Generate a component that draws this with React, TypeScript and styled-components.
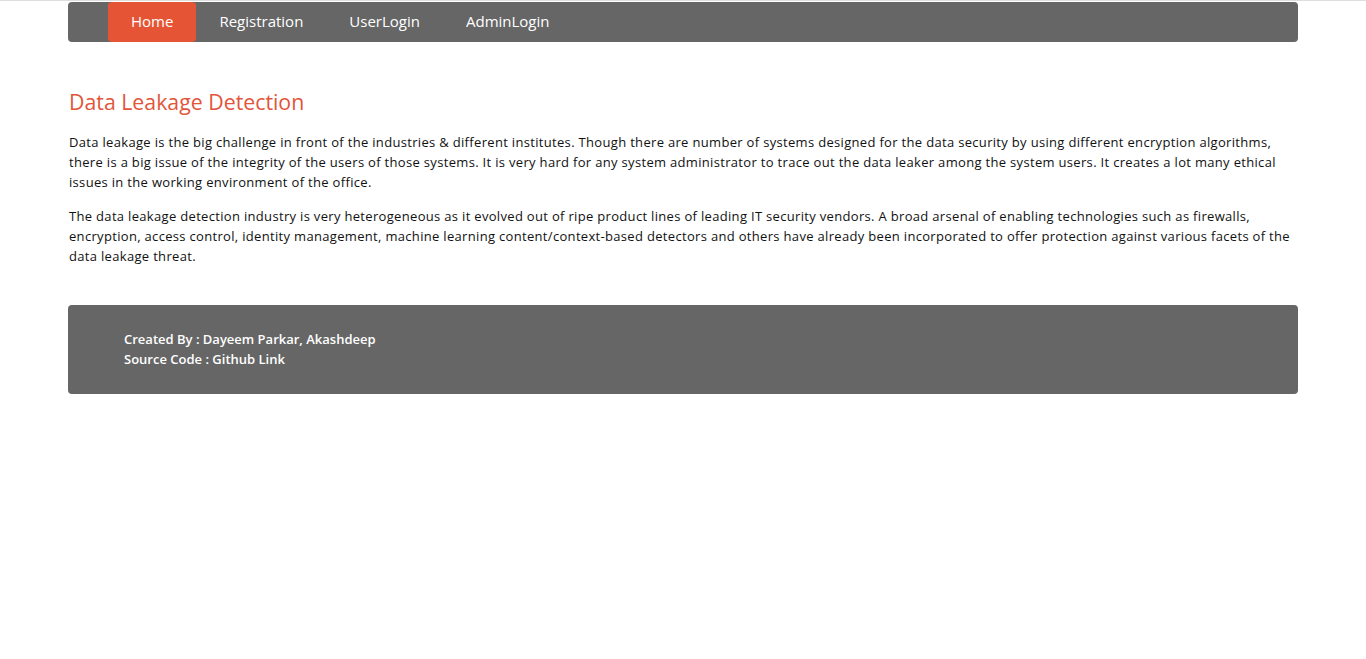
import React from "react";
import styled, { createGlobalStyle } from "styled-components";

const Global = createGlobalStyle`
  html, body { margin: 0; padding: 0; background: #fff; }
  body { border-top: 1px solid #dedede; font-family: "Open Sans", "Liberation Sans", Arial, sans-serif; }
`;

const Page = styled.div`
  width: 1230px;
  margin: 0 auto;
  padding-top: 1px;
`;

const Nav = styled.nav`
  height: 40px;
  background: #666666;
  border-radius: 4px;
  display: flex;
  padding-left: 40px;
`;

const NavItem = styled.a<{ $active?: boolean }>`
  display: flex;
  align-items: center;
  padding: 0 23px 2px 23px;
  box-sizing: border-box;
  height: 40px;
  color: #fff;
  font-size: 15px;
  text-decoration: none;
  border-radius: 4px;
  background: ${(p) => (p.$active ? "#e55535" : "transparent")};
`;

const Main = styled.main`
  padding: 46px 0 0 1px;
`;

const Title = styled.h1`
  margin: 0 0 16px 0;
  font-size: 21.3px;
  font-weight: normal;
  color: #e2553a;
  line-height: 28px;
`;

const Para = styled.p`
  margin: 0 0 14px 0;
  font-size: 13px;
  line-height: 20px;
  letter-spacing: 0.32px;
  color: #111;
`;

const Footer = styled.footer`
  margin-top: 39px;
  height: 89px;
  background: #666666;
  border-radius: 4px;
  display: flex;
  flex-direction: column;
  justify-content: center;
  padding-left: 56px;
  padding-bottom: 1px;
  box-sizing: border-box;
`;

const FootLine = styled.div`
  color: #fff;
  font-size: 13px;
  line-height: 20px;
  font-weight: 600;
`;

export default function App() {
  return (
    <>
      <Global />
      <Page>
        <Nav>
          <NavItem $active href="#">Home</NavItem>
          <NavItem href="#">Registration</NavItem>
          <NavItem href="#">UserLogin</NavItem>
          <NavItem href="#">AdminLogin</NavItem>
        </Nav>
        <Main>
          <Title>Data Leakage Detection</Title>
          <Para>
            Data leakage is the big challenge in front of the industries &amp; different institutes. Though there are number of systems designed for the data security by using different encryption algorithms, there is a big issue of the integrity of the users of those systems. It is very hard for any system administrator to trace out the data leaker among the system users. It creates a lot many ethical issues in the working environment of the office.
          </Para>
          <Para>
            The data leakage detection industry is very heterogeneous as it evolved out of ripe product lines of leading IT security vendors. A broad arsenal of enabling technologies such as firewalls, encryption, access control, identity management, machine learning content/context-based detectors and others have already been incorporated to offer protection against various facets of the data leakage threat.
          </Para>
        </Main>
        <Footer>
          <FootLine>Created By : Dayeem Parkar, Akashdeep</FootLine>
          <FootLine>Source Code : Github Link</FootLine>
        </Footer>
      </Page>
    </>
  );
}
